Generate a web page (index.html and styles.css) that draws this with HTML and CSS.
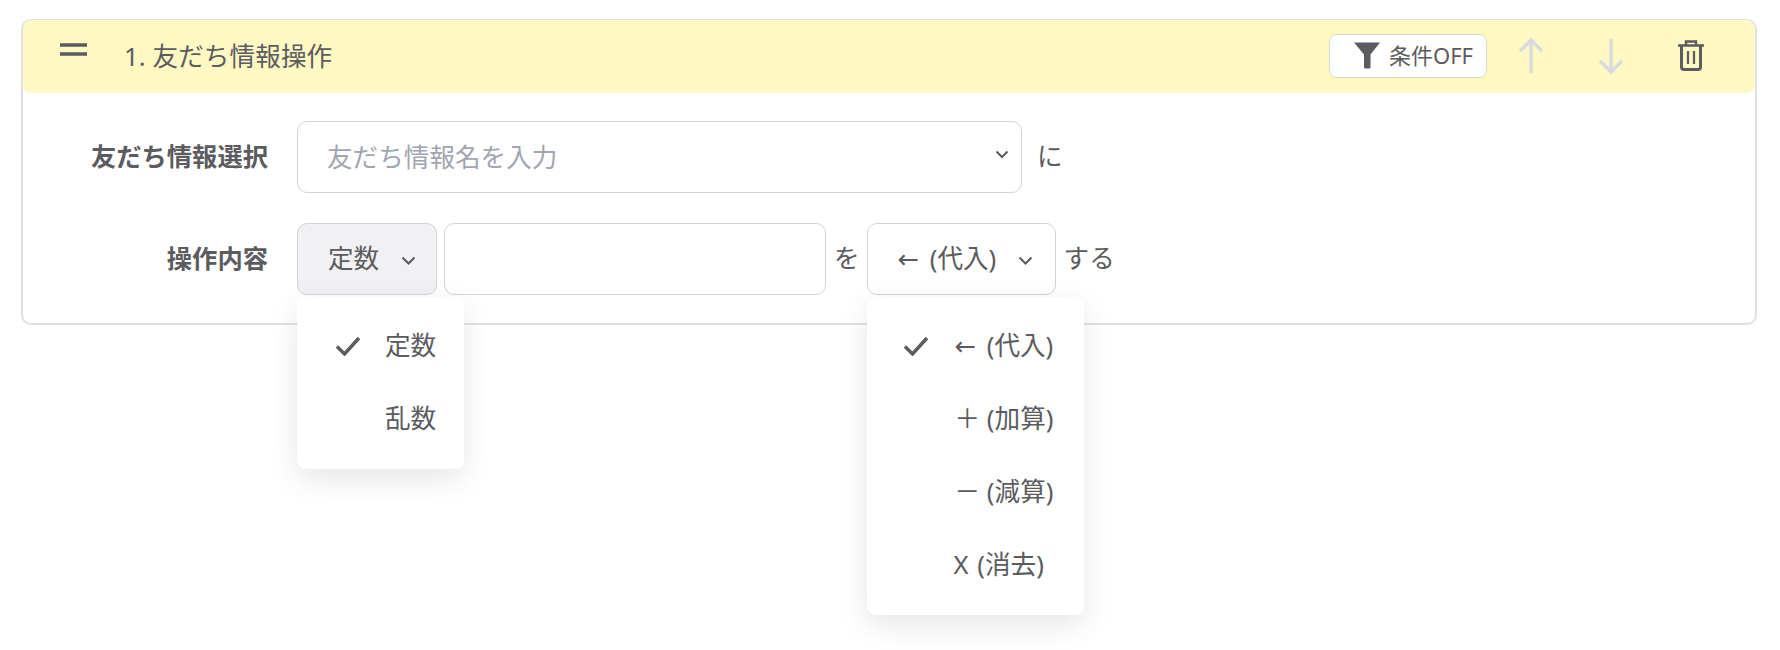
FILE: index.html
```html
<!DOCTYPE html>
<html lang="ja">
<head>
    <meta charset="UTF-8">
    <meta name="viewport" content="width=device-width, initial-scale=1.0">
    <title>友だち情報操作</title>
    <link rel="stylesheet" href="styles.css">
</head>
<body>
    <div class="card">
        <div class="card-header">
            <svg class="handle" width="27" height="13" viewBox="0 0 27 13">
                <path d="M0 2h27M0 11h27" stroke="currentColor" stroke-width="3.500"/>
            </svg>
            <div class="card-title">1. 友だち情報操作</div>
            <button class="filter-btn" type="button">
                <svg width="26" height="27" viewBox="0 0 26 27">
                    <path d="M0 0.500h26L16.500 12.500V25a1.500 1.500 0 0 1-1.500 1.500h-3A1.500 1.500 0 0 1 10 25V12.500z" fill="currentColor"/>
                </svg>
                条件OFF
            </button>
            <div class="header-icons">
                <button class="icon-btn disabled" type="button">
                    <svg width="26" height="36" viewBox="0 0 26 36">
                        <path d="M13 35V2M2 13L13 2l11 11" fill="none" stroke="currentColor" stroke-width="3.500"/>
                    </svg>
                </button>
                <button class="icon-btn disabled" type="button">
                    <svg width="26" height="36" viewBox="0 0 26 36">
                        <path d="M13 1v33M2 23l11 11 11-11" fill="none" stroke="currentColor" stroke-width="3.500"/>
                    </svg>
                </button>
                <button class="icon-btn" type="button">
                    <svg width="26" height="31" viewBox="0 0 26 31">
                        <path d="M0 5.500h26M8 5V1.500h10V5" fill="none" stroke="currentColor" stroke-width="2.500"/>
                        <path d="M3.500 6v21a2.500 2.500 0 0 0 2.500 2.500h14a2.500 2.500 0 0 0 2.500-2.500V6" fill="none" stroke="currentColor" stroke-width="3"/>
                        <path d="M10 11v13M16 11v13" fill="none" stroke="currentColor" stroke-width="2.200"/>
                    </svg>
                </button>
            </div>
        </div>

        <form class="card-body">
            <div class="row">
                <label class="row-label" for="infoName">友だち情報選択</label>
                <div class="combo">
                    <input class="field combo-input" type="text" id="infoName" placeholder="友だち情報名を入力">
                    <svg class="combo-chevron" width="14" height="9" viewBox="0 0 14 9">
                        <path d="M1.500 1.500L7 7l5.500-5.500" fill="none" stroke="currentColor" stroke-width="2"/>
                    </svg>
                </div>
                <span class="row-text text-ni">に</span>
            </div>

            <div class="row">
                <label class="row-label" for="operand">操作内容</label>
                <div class="menu-wrap">
                    <button class="select-btn open type-btn" type="button">
                        定数
                        <svg width="15" height="9" viewBox="0 0 15 9">
                            <path d="M1.500 1.500l6 6 6-6" fill="none" stroke="currentColor" stroke-width="2"/>
                        </svg>
                    </button>
                    <ul class="menu type-menu">
                        <li class="menu-item">
                            <svg class="check" width="26" height="20" viewBox="0 0 26 20">
                                <path d="M2 10.500l7.500 7.500L24 2" fill="none" stroke="currentColor" stroke-width="3.500"/>
                            </svg>
                            <span class="menu-label">定数</span>
                        </li>
                        <li class="menu-item"><span class="menu-label">乱数</span></li>
                    </ul>
                </div>
                <input class="field operand" type="text" id="operand">
                <span class="row-text text-wo">を</span>
                <div class="menu-wrap">
                    <button class="select-btn op-btn" type="button">
                        <span><span class="op-sign">←</span> (代入)</span>
                        <svg width="15" height="9" viewBox="0 0 15 9">
                            <path d="M1.500 1.500l6 6 6-6" fill="none" stroke="currentColor" stroke-width="2"/>
                        </svg>
                    </button>
                    <ul class="menu op-menu">
                        <li class="menu-item">
                            <svg class="check" width="26" height="20" viewBox="0 0 26 20">
                                <path d="M2 10.500l7.500 7.500L24 2" fill="none" stroke="currentColor" stroke-width="3.500"/>
                            </svg>
                            <span class="menu-label"><span class="op-sign">←</span> (代入)</span>
                        </li>
                        <li class="menu-item"><span class="menu-label">＋ (加算)</span></li>
                        <li class="menu-item"><span class="menu-label">－ (減算)</span></li>
                        <li class="menu-item"><span class="menu-label op-clear">X (消去)</span></li>
                    </ul>
                </div>
                <span class="row-text text-suru">する</span>
            </div>
        </form>
    </div>
</body>
</html>
```

FILE: styles.css
```css
* {
    box-sizing: border-box;
    margin: 0;
    padding: 0;
}

body {
    font-family: "Noto Sans", "Noto Sans CJK JP", sans-serif;
    font-size: 25.6px;
    line-height: 1.5;
    color: #5b5b60;
    background-color: #fff;
    min-height: 100vh;
    padding: 19px 23px 0 21px;
}

button {
    font: inherit;
    color: inherit;
    background: none;
    border: none;
}

ul {
    list-style: none;
}

.card {
    border: 2px solid #e1e1e4;
    border-top-width: 1px;
    border-radius: 10px;
}

.card-header {
    display: flex;
    align-items: center;
    height: 73px;
    padding: 0 44px 2px 37px;
    background-color: #fef8c3;
    border-radius: 9px 9px 8px 8px;
}

.handle {
    margin: 0 37px 12px 0;
}

.card-title {
    flex: 1;
    margin-top: 3px;
    letter-spacing: 0.1px;
}

.filter-btn {
    display: flex;
    align-items: center;
    gap: 9px;
    width: 158px;
    height: 44px;
    margin-right: 24px;
    padding-left: 24px;
    font-size: 22px;
    background-color: #fff;
    border: 1.5px solid #d8d8dc;
    border-radius: 8px;
}

.header-icons {
    display: flex;
    gap: 40px;
}

.icon-btn {
    display: flex;
    align-items: center;
    justify-content: center;
    width: 40px;
    height: 40px;
}

.icon-btn.disabled {
    color: #d9d9de;
}

.card-body {
    display: grid;
    gap: 30px;
    padding: 28px 0 28px;
}

.row {
    display: flex;
    align-items: center;
    height: 72px;
}

.row-label {
    width: 245px;
    margin-right: 29px;
    font-size: 25.3px;
    font-weight: bold;
    text-align: right;
}

.text-ni {
    margin-left: 15px;
}

.text-wo {
    margin: 0 7px 0 8px;
}

.text-suru {
    margin-left: 8px;
}

.field {
    height: 72px;
    padding: 0 29px;
    font: inherit;
    color: inherit;
    background-color: #fff;
    border: 1.5px solid #d3d3d8;
    border-radius: 10px;
    outline: none;
}

.field::placeholder {
    color: #a0a5b1;
}

.combo {
    position: relative;
    width: 725px;
}

.combo-input {
    width: 100%;
}

.combo-chevron {
    position: absolute;
    top: 29px;
    right: 13px;
}

.menu-wrap {
    position: relative;
}

.select-btn {
    display: flex;
    align-items: center;
    height: 72px;
    padding-left: 30px;
    white-space: nowrap;
    background-color: #fff;
    border: 1.5px solid #d3d3d8;
    border-radius: 10px;
}

.select-btn svg {
    margin-top: 2px;
}

.select-btn.open {
    background-color: #f1f1f4;
}

.type-btn {
    width: 140px;
    gap: 22px;
}

.op-btn {
    width: 189px;
    gap: 22px;
}

.operand {
    width: 382px;
    margin-left: 7px;
}

.menu {
    position: absolute;
    top: 74px;
    left: 0;
    z-index: 10;
    padding: 13px 0;
    background-color: #fff;
    border-radius: 8px;
    box-shadow: 0 10px 30px rgba(0, 0, 0, 0.1);
}

.type-menu {
    width: 167px;
}

.op-menu {
    width: 217px;
}

.menu-item {
    position: relative;
    display: flex;
    align-items: center;
    height: 73px;
    padding-left: 88px;
    white-space: nowrap;
}

.check {
    position: absolute;
    left: 38px;
    top: 26px;
}

.op-menu .check {
    left: 36px;
}

.op-sign {
    margin-right: 4px;
    font-family: "DejaVu Sans", sans-serif;
}

.op-clear {
    margin-left: -1px;
    word-spacing: 2px;
}
```
